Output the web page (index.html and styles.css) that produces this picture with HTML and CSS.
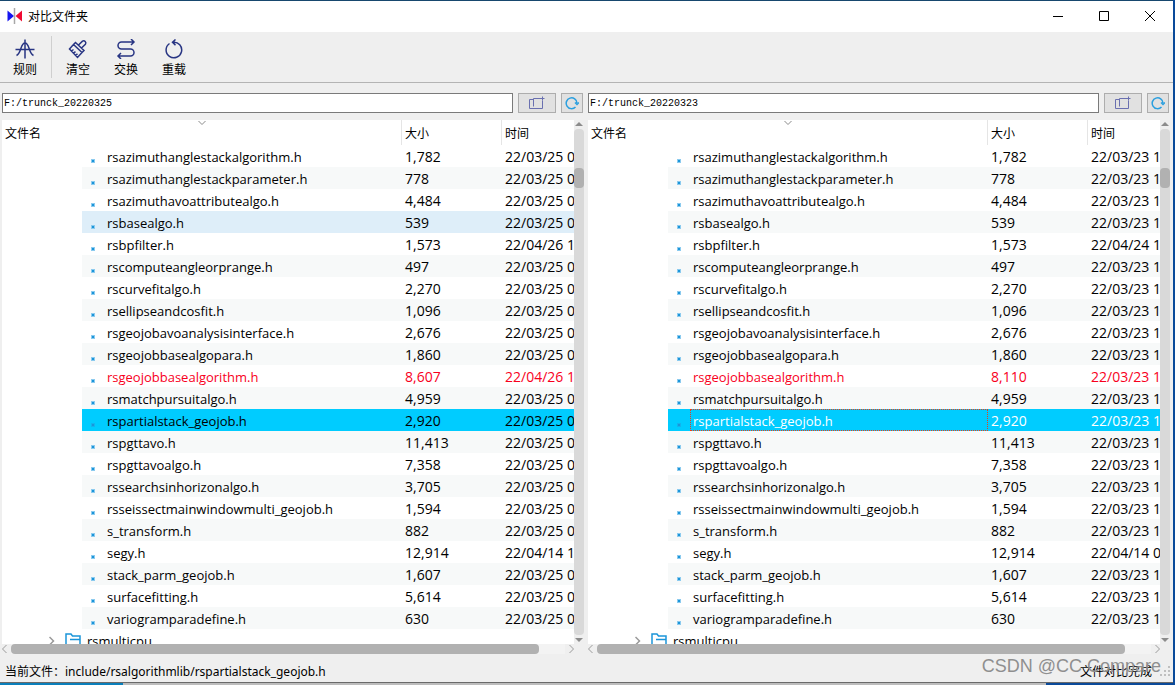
FILE: index.html
```
<!DOCTYPE html>
<html lang="zh-CN">
<head>
    <meta charset="UTF-8">
    <meta name="viewport" content="width=device-width, initial-scale=1.0">
    <title>对比文件夹</title>
    <link rel="stylesheet" href="styles.css">
</head>
<body>
    <div class="window">
        <header class="title-bar">
            <svg class="app-icon" width="16" height="16" viewBox="0 0 16 16" aria-hidden="true">
                <path d="M0.500 2.500v11l6.500-5.500z" fill="#1414f0"/>
                <path d="M15 2.500v11L8.500 8z" fill="#f00a32"/>
                <path d="M7.500 0v16" stroke="#a8a8a8" stroke-width="1.500"/>
            </svg>
            <h1>对比文件夹</h1>
            <div class="window-buttons">
                <button type="button" aria-label="最小化"><svg width="10" height="10"><path d="M0 5.500h10"/></svg></button>
                <button type="button" aria-label="最大化"><svg width="10" height="10"><path d="M.5.5h9v9h-9z"/></svg></button>
                <button type="button" aria-label="关闭"><svg width="10" height="10"><path d="M0 0l10 10M10 0L0 10"/></svg></button>
            </div>
        </header>

        <nav class="toolbar">
            <button type="button" class="tool">
                <svg width="20" height="20" viewBox="0 0 20 20"><path d="M.5 10.500h19M10 .5v19M1.500 16.500C6.500 14 5.500 4 10 4S13.500 14 18.500 16.500"/></svg>
                规则
            </button>
            <span class="tool-divider"></span>
            <button type="button" class="tool">
                <svg width="20" height="20" viewBox="0 0 20 20"><path d="M10.500 6l4-3.800q1.500-1 2.700.3t.2 2.700L13.500 9M7.500 3.500l8.500 8-2 2-8.500-8zM5.500 5.500L1.500 10l8 8.500 4.500-5M3.500 12l2-1.500M5.500 14.200l2-1.500M7.500 16.400l2-1.500"/></svg>
                清空
            </button>
            <button type="button" class="tool">
                <svg width="20" height="20" viewBox="0 0 20 20"><path d="M18 3H5.500a3.500 3.500 0 0 0 0 7h9a3.500 3.500 0 0 1 0 7H2M15 0l3 3-3 3M5 14l-3 3 3 3"/></svg>
                交换
            </button>
            <button type="button" class="tool">
                <svg width="20" height="20" viewBox="0 0 20 20"><path d="M5.500 4.500A7.800 7.800 0 1 0 9 3.200h2M11.500.500L8.500 3.200l3 3"/></svg>
                重载
            </button>
        </nav>

        <main class="panes">
            <section class="pane">
                <div class="path-row">
                    <input type="text" class="path-input" aria-label="左侧文件夹" value="F:/trunck_20220325">
                    <button type="button" class="browse-button" aria-label="选择文件夹"><svg width="16" height="14" viewBox="0 0 16 14"><path d="M4.500 3.500h-4v9h13v-8M4.500 10.500v-8h9M10.500 2.500h5M13.500.500v4"/></svg></button>
                    <button type="button" class="refresh-button" aria-label="刷新"><svg width="14" height="14" viewBox="0 0 14 14"><path d="M10.500 11A5.400 5.400 0 1 1 12 7M10 6.500l2 2 2-2"/></svg></button>
                </div>
                <div class="tree-frame">
                    <div class="tree">
                        <table class="file-table">
                            <colgroup><col class="col-indent"><col class="col-name"><col class="col-size"><col></colgroup>
                            <thead>
                                <tr><th colspan="2" class="sorted">文件名<svg class="sort-mark" width="8" height="4"><path d="M.5 0L4 3.500 7.500 0"/></svg></th><th>大小</th><th>时间</th></tr>
                            </thead>
                            <tbody>
                                <tr><td></td><td class="file">rsazimuthanglestackalgorithm.h</td><td>1,782</td><td>22/03/25 0</td></tr>
                                <tr><td></td><td class="file">rsazimuthanglestackparameter.h</td><td>778</td><td>22/03/25 0</td></tr>
                                <tr><td></td><td class="file">rsazimuthavoattributealgo.h</td><td>4,484</td><td>22/03/25 0</td></tr>
                                <tr class="hovered"><td></td><td class="file">rsbasealgo.h</td><td>539</td><td>22/03/25 0</td></tr>
                                <tr><td></td><td class="file">rsbpfilter.h</td><td>1,573</td><td>22/04/26 1</td></tr>
                                <tr><td></td><td class="file">rscomputeangleorprange.h</td><td>497</td><td>22/03/25 0</td></tr>
                                <tr><td></td><td class="file">rscurvefitalgo.h</td><td>2,270</td><td>22/03/25 0</td></tr>
                                <tr><td></td><td class="file">rsellipseandcosfit.h</td><td>1,096</td><td>22/03/25 0</td></tr>
                                <tr><td></td><td class="file">rsgeojobavoanalysisinterface.h</td><td>2,676</td><td>22/03/25 0</td></tr>
                                <tr><td></td><td class="file">rsgeojobbasealgopara.h</td><td>1,860</td><td>22/03/25 0</td></tr>
                                <tr class="changed"><td></td><td class="file">rsgeojobbasealgorithm.h</td><td>8,607</td><td>22/04/26 1</td></tr>
                                <tr><td></td><td class="file">rsmatchpursuitalgo.h</td><td>4,959</td><td>22/03/25 0</td></tr>
                                <tr class="selected"><td></td><td class="file">rspartialstack_geojob.h</td><td>2,920</td><td>22/03/25 0</td></tr>
                                <tr><td></td><td class="file">rspgttavo.h</td><td>11,413</td><td>22/03/25 0</td></tr>
                                <tr><td></td><td class="file">rspgttavoalgo.h</td><td>7,358</td><td>22/03/25 0</td></tr>
                                <tr><td></td><td class="file">rssearchsinhorizonalgo.h</td><td>3,705</td><td>22/03/25 0</td></tr>
                                <tr><td></td><td class="file">rsseissectmainwindowmulti_geojob.h</td><td>1,594</td><td>22/03/25 0</td></tr>
                                <tr><td></td><td class="file">s_transform.h</td><td>882</td><td>22/03/25 0</td></tr>
                                <tr><td></td><td class="file">segy.h</td><td>12,914</td><td>22/04/14 1</td></tr>
                                <tr><td></td><td class="file">stack_parm_geojob.h</td><td>1,607</td><td>22/03/25 0</td></tr>
                                <tr><td></td><td class="file">surfacefitting.h</td><td>5,614</td><td>22/03/25 0</td></tr>
                                <tr><td></td><td class="file">variogramparadefine.h</td><td>630</td><td>22/03/25 0</td></tr>
                            </tbody>
                        </table>
                        <div class="folder-row">
                            <svg class="expander" width="6" height="10"><path d="M.5 1l4 4-4 4"/></svg>
                            <svg class="folder-icon" width="16" height="16"><path d="M1 15V1h5l1.500 2H15v12zM5 6.500h10"/></svg>
                            rsmulticpu
                        </div>
                    </div>
                    <div class="scroll-v"><i class="arrow-up"></i><div class="track"><div class="thumb"></div></div><i class="arrow-down"></i></div>
                    <div class="scroll-h">
                        <svg width="5" height="8"><path d="M4.500 0l-4 4 4 4"/></svg>
                        <div class="track"><div class="thumb"></div></div>
                        <svg width="5" height="8"><path d="M.5 0l4 4-4 4"/></svg>
                    </div>
                </div>
            </section>

            <section class="pane">
                <div class="path-row">
                    <input type="text" class="path-input" aria-label="右侧文件夹" value="F:/trunck_20220323">
                    <button type="button" class="browse-button" aria-label="选择文件夹"><svg width="16" height="14" viewBox="0 0 16 14"><path d="M4.500 3.500h-4v9h13v-8M4.500 10.500v-8h9M10.500 2.500h5M13.500.500v4"/></svg></button>
                    <button type="button" class="refresh-button" aria-label="刷新"><svg width="14" height="14" viewBox="0 0 14 14"><path d="M10.500 11A5.400 5.400 0 1 1 12 7M10 6.500l2 2 2-2"/></svg></button>
                </div>
                <div class="tree-frame">
                    <div class="tree">
                        <table class="file-table">
                            <colgroup><col class="col-indent"><col class="col-name"><col class="col-size"><col></colgroup>
                            <thead>
                                <tr><th colspan="2" class="sorted">文件名<svg class="sort-mark" width="8" height="4"><path d="M.5 0L4 3.500 7.500 0"/></svg></th><th>大小</th><th>时间</th></tr>
                            </thead>
                            <tbody>
                                <tr><td></td><td class="file">rsazimuthanglestackalgorithm.h</td><td>1,782</td><td>22/03/23 1</td></tr>
                                <tr><td></td><td class="file">rsazimuthanglestackparameter.h</td><td>778</td><td>22/03/23 1</td></tr>
                                <tr><td></td><td class="file">rsazimuthavoattributealgo.h</td><td>4,484</td><td>22/03/23 1</td></tr>
                                <tr><td></td><td class="file">rsbasealgo.h</td><td>539</td><td>22/03/23 1</td></tr>
                                <tr><td></td><td class="file">rsbpfilter.h</td><td>1,573</td><td>22/04/24 1</td></tr>
                                <tr><td></td><td class="file">rscomputeangleorprange.h</td><td>497</td><td>22/03/23 1</td></tr>
                                <tr><td></td><td class="file">rscurvefitalgo.h</td><td>2,270</td><td>22/03/23 1</td></tr>
                                <tr><td></td><td class="file">rsellipseandcosfit.h</td><td>1,096</td><td>22/03/23 1</td></tr>
                                <tr><td></td><td class="file">rsgeojobavoanalysisinterface.h</td><td>2,676</td><td>22/03/23 1</td></tr>
                                <tr><td></td><td class="file">rsgeojobbasealgopara.h</td><td>1,860</td><td>22/03/23 1</td></tr>
                                <tr class="changed"><td></td><td class="file">rsgeojobbasealgorithm.h</td><td>8,110</td><td>22/03/23 1</td></tr>
                                <tr><td></td><td class="file">rsmatchpursuitalgo.h</td><td>4,959</td><td>22/03/23 1</td></tr>
                                <tr class="selected focused"><td></td><td class="file">rspartialstack_geojob.h</td><td>2,920</td><td>22/03/23 1</td></tr>
                                <tr><td></td><td class="file">rspgttavo.h</td><td>11,413</td><td>22/03/23 1</td></tr>
                                <tr><td></td><td class="file">rspgttavoalgo.h</td><td>7,358</td><td>22/03/23 1</td></tr>
                                <tr><td></td><td class="file">rssearchsinhorizonalgo.h</td><td>3,705</td><td>22/03/23 1</td></tr>
                                <tr><td></td><td class="file">rsseissectmainwindowmulti_geojob.h</td><td>1,594</td><td>22/03/23 1</td></tr>
                                <tr><td></td><td class="file">s_transform.h</td><td>882</td><td>22/03/23 1</td></tr>
                                <tr><td></td><td class="file">segy.h</td><td>12,914</td><td>22/04/14 0</td></tr>
                                <tr><td></td><td class="file">stack_parm_geojob.h</td><td>1,607</td><td>22/03/23 1</td></tr>
                                <tr><td></td><td class="file">surfacefitting.h</td><td>5,614</td><td>22/03/23 1</td></tr>
                                <tr><td></td><td class="file">variogramparadefine.h</td><td>630</td><td>22/03/23 1</td></tr>
                            </tbody>
                        </table>
                        <div class="folder-row">
                            <svg class="expander" width="6" height="10"><path d="M.5 1l4 4-4 4"/></svg>
                            <svg class="folder-icon" width="16" height="16"><path d="M1 15V1h5l1.500 2H15v12zM5 6.500h10"/></svg>
                            rsmulticpu
                        </div>
                    </div>
                    <div class="scroll-v"><i class="arrow-up"></i><div class="track"><div class="thumb"></div></div><i class="arrow-down"></i></div>
                    <div class="scroll-h">
                        <svg width="5" height="8"><path d="M4.500 0l-4 4 4 4"/></svg>
                        <div class="track"><div class="thumb"></div></div>
                        <svg width="5" height="8"><path d="M.5 0l4 4-4 4"/></svg>
                    </div>
                </div>
            </section>
        </main>

        <footer class="status-bar">
            <span class="current-file">当前文件：<span class="file-path">include/rsalgorithmlib/rspartialstack_geojob.h</span></span>
            <span class="compare-state">文件对比完成</span>
            <svg class="size-grip" width="10" height="10" aria-hidden="true"><path d="M8 0h2v2H8zM4 4h2v2H4zM8 4h2v2H8zM0 8h2v2H0zM4 8h2v2H4zM8 8h2v2H8z"/></svg>
            <span class="watermark">CSDN @CC Compare</span>
        </footer>
    </div>
    <div class="desktop-edge"></div>
</body>
</html>
```
FILE: styles.css
```
*,
*::before,
*::after {
    box-sizing: border-box;
}

body {
    margin: 0;
    height: 100vh;
    display: flex;
    flex-direction: column;
    background-color: #0a4a9a;
    font-family: "Open Sans", "Noto Sans CJK SC", sans-serif;
    font-size: 13px;
    color: #000;
}

svg {
    display: block;
    flex: none;
    fill: none;
}

button {
    margin: 0;
    padding: 0;
    border: none;
    background: none;
    font-family: inherit;
    font-size: 12px;
    color: inherit;
}

.window {
    flex: 1;
    min-height: 0;
    display: flex;
    flex-direction: column;
    margin-right: 2px;
    background-color: #efefef;
    border-top: 1px solid #17476e;
    border-bottom: 1px solid #6a6a6a;
}

/* title bar */
.title-bar {
    display: flex;
    align-items: center;
    height: 31px;
    padding: 0 0 2px 7px;
    background-color: #fff;
}

.title-bar h1 {
    margin: 0 0 0 5px;
    font-size: 12px;
    font-weight: 400;
}

.window-buttons {
    display: flex;
    height: 100%;
    margin-left: auto;
}

.window-buttons button {
    display: flex;
    align-items: center;
    justify-content: center;
    width: 46px;
}

.window-buttons svg {
    stroke: #000;
}

/* toolbar */
.toolbar {
    display: flex;
    height: 51px;
    padding: 4px 0 0 1px;
    border-bottom: 1px solid #b4b4b4;
}

.tool {
    display: flex;
    flex-direction: column;
    align-items: center;
    gap: 2px;
    width: 48px;
    padding-top: 3px;
    line-height: 18px;
}

.tool svg {
    stroke: #283583;
    stroke-width: 1.5;
}

.tool-divider {
    width: 1px;
    height: 42px;
    margin: 0 2px;
    background-color: #cfcfcf;
}

/* two folders side by side */
.panes {
    flex: 1;
    min-height: 0;
    display: flex;
    gap: 4px;
    padding: 10px 3px 0 2px;
}

.pane {
    flex: 1;
    min-width: 0;
    display: flex;
    flex-direction: column;
    gap: 7px;
}

.path-row {
    display: flex;
    gap: 5px;
    height: 20px;
    padding-right: 1px;
}

.path-input {
    flex: 1;
    min-width: 0;
    padding: 0 1px;
    border: 1px solid #7a7a7a;
    background-color: #fff;
    font-family: "Liberation Mono", monospace;
    font-size: 10px;
    color: #000;
}

.browse-button,
.refresh-button {
    display: flex;
    align-items: center;
    justify-content: center;
    width: 38px;
    border: 1px solid #adadad;
    background-color: #e1e1e1;
}

.refresh-button {
    width: 22px;
}

.browse-button svg {
    stroke: #6a70b0;
}

.refresh-button svg {
    stroke: #2a9fdf;
    stroke-width: 1.5;
}

.tree-frame {
    flex: 1;
    min-height: 0;
    display: grid;
    grid-template-columns: minmax(0, 1fr) 10px;
    grid-template-rows: minmax(0, 1fr) 10px;
}

.tree {
    overflow: hidden;
    background-color: #fff;
}

.file-table {
    width: 100%;
    table-layout: fixed;
    border-spacing: 0;
}

.col-indent {
    width: 80px;
}

.col-name {
    width: 320px;
}

.col-size {
    width: 100px;
}

.file-table th {
    position: relative;
    height: 25px;
    padding: 2px 0 0 3px;
    border-right: 1px solid #e5e5e5;
    font-size: 12px;
    font-weight: 400;
    line-height: 18px;
    text-align: left;
}

.file-table th:last-child {
    border-right: none;
}

.sort-mark {
    position: absolute;
    top: 1px;
    left: 50%;
    margin-left: -4px;
    stroke: #8a8a8a;
}

.file-table td {
    height: 22px;
    padding: 2px 0 0 3px;
    font-size: 14px;
    line-height: 20px;
    white-space: nowrap;
    overflow: hidden;
}

.file-table .file {
    font-size: 13px;
}

.file-table tbody tr:nth-child(even) td:not(:first-child) {
    background-color: #f7f9f9;
}

.file-table .file::before {
    content: "";
    display: inline-block;
    width: 4px;
    height: 4px;
    margin: 0 12px 0 6px;
    border: 1px solid #8ccbef;
    background-color: #1b95d9;
    vertical-align: -1px;
}

.file-table tbody tr.hovered td:not(:first-child) {
    background-color: #deeef9;
}

.file-table tr.changed {
    color: #f8001c;
}

.file-table tbody tr.selected td:not(:first-child) {
    background-color: #00ccff;
}

.file-table .selected .file::before {
    border-color: #12b4ee;
}

.file-table tr.focused {
    color: #fff;
}

.focused .file {
    position: relative;
}

.focused .file::after {
    content: "";
    position: absolute;
    inset: 0 0 0 22px;
    border: 1px dotted #f03c14;
}

.folder-row {
    display: flex;
    align-items: center;
    height: 24px;
    padding-left: 47px;
}

.expander {
    margin-right: 10px;
    stroke: #9a9a9a;
    stroke-width: 1.5;
}

.folder-icon {
    margin-right: 6px;
    stroke: #1b95d9;
    stroke-width: 1.5;
}

/* scroll bars */
.scroll-v {
    display: flex;
    flex-direction: column;
    align-items: center;
    gap: 3px;
    padding: 2px 0;
}

.scroll-v .track {
    flex: 1;
    width: 10px;
    padding-top: 39px;
    border-radius: 4px;
    background-color: #d9d9d9;
}

.scroll-v .thumb {
    height: 20px;
    border-radius: 4px;
    background-color: #b1b1b1;
}

.arrow-up,
.arrow-down {
    border: 4px solid transparent;
    border-top-width: 0;
    border-bottom-color: #8c8c8c;
}

.arrow-down {
    border-top: 4px solid #8c8c8c;
    border-bottom-width: 0;
}

.scroll-h {
    display: flex;
    align-items: center;
    gap: 4px;
}

.scroll-h svg {
    stroke: #9a9a9a;
}

.scroll-h .track {
    flex: 1;
    padding-right: 26px;
    background-color: #f3f3f3;
}

.scroll-h .thumb {
    height: 10px;
    border-radius: 4px;
    background-color: #b1b1b1;
}

/* status bar */
.status-bar {
    position: relative;
    display: flex;
    align-items: center;
    height: 28px;
    padding: 6px 3px 0 5px;
}

.current-file {
    font-size: 12px;
}

.file-path {
    font-family: "Noto Sans", sans-serif;
    font-size: 12px;
}

.compare-state {
    margin-left: auto;
    padding-right: 8px;
    font-size: 12px;
}

.size-grip {
    fill: #bfbfbf;
}

.watermark {
    position: absolute;
    right: 12px;
    bottom: 5px;
    font-family: "Liberation Sans", sans-serif;
    font-size: 18px;
    color: #8f8f8f;
}

/* strip of the desktop under the window */
.desktop-edge {
    height: 2px;
    background: linear-gradient(to right, #0a7fbb 123px, #bdbdbd 123px 89%, #0a4a9a 89%);
}
```
